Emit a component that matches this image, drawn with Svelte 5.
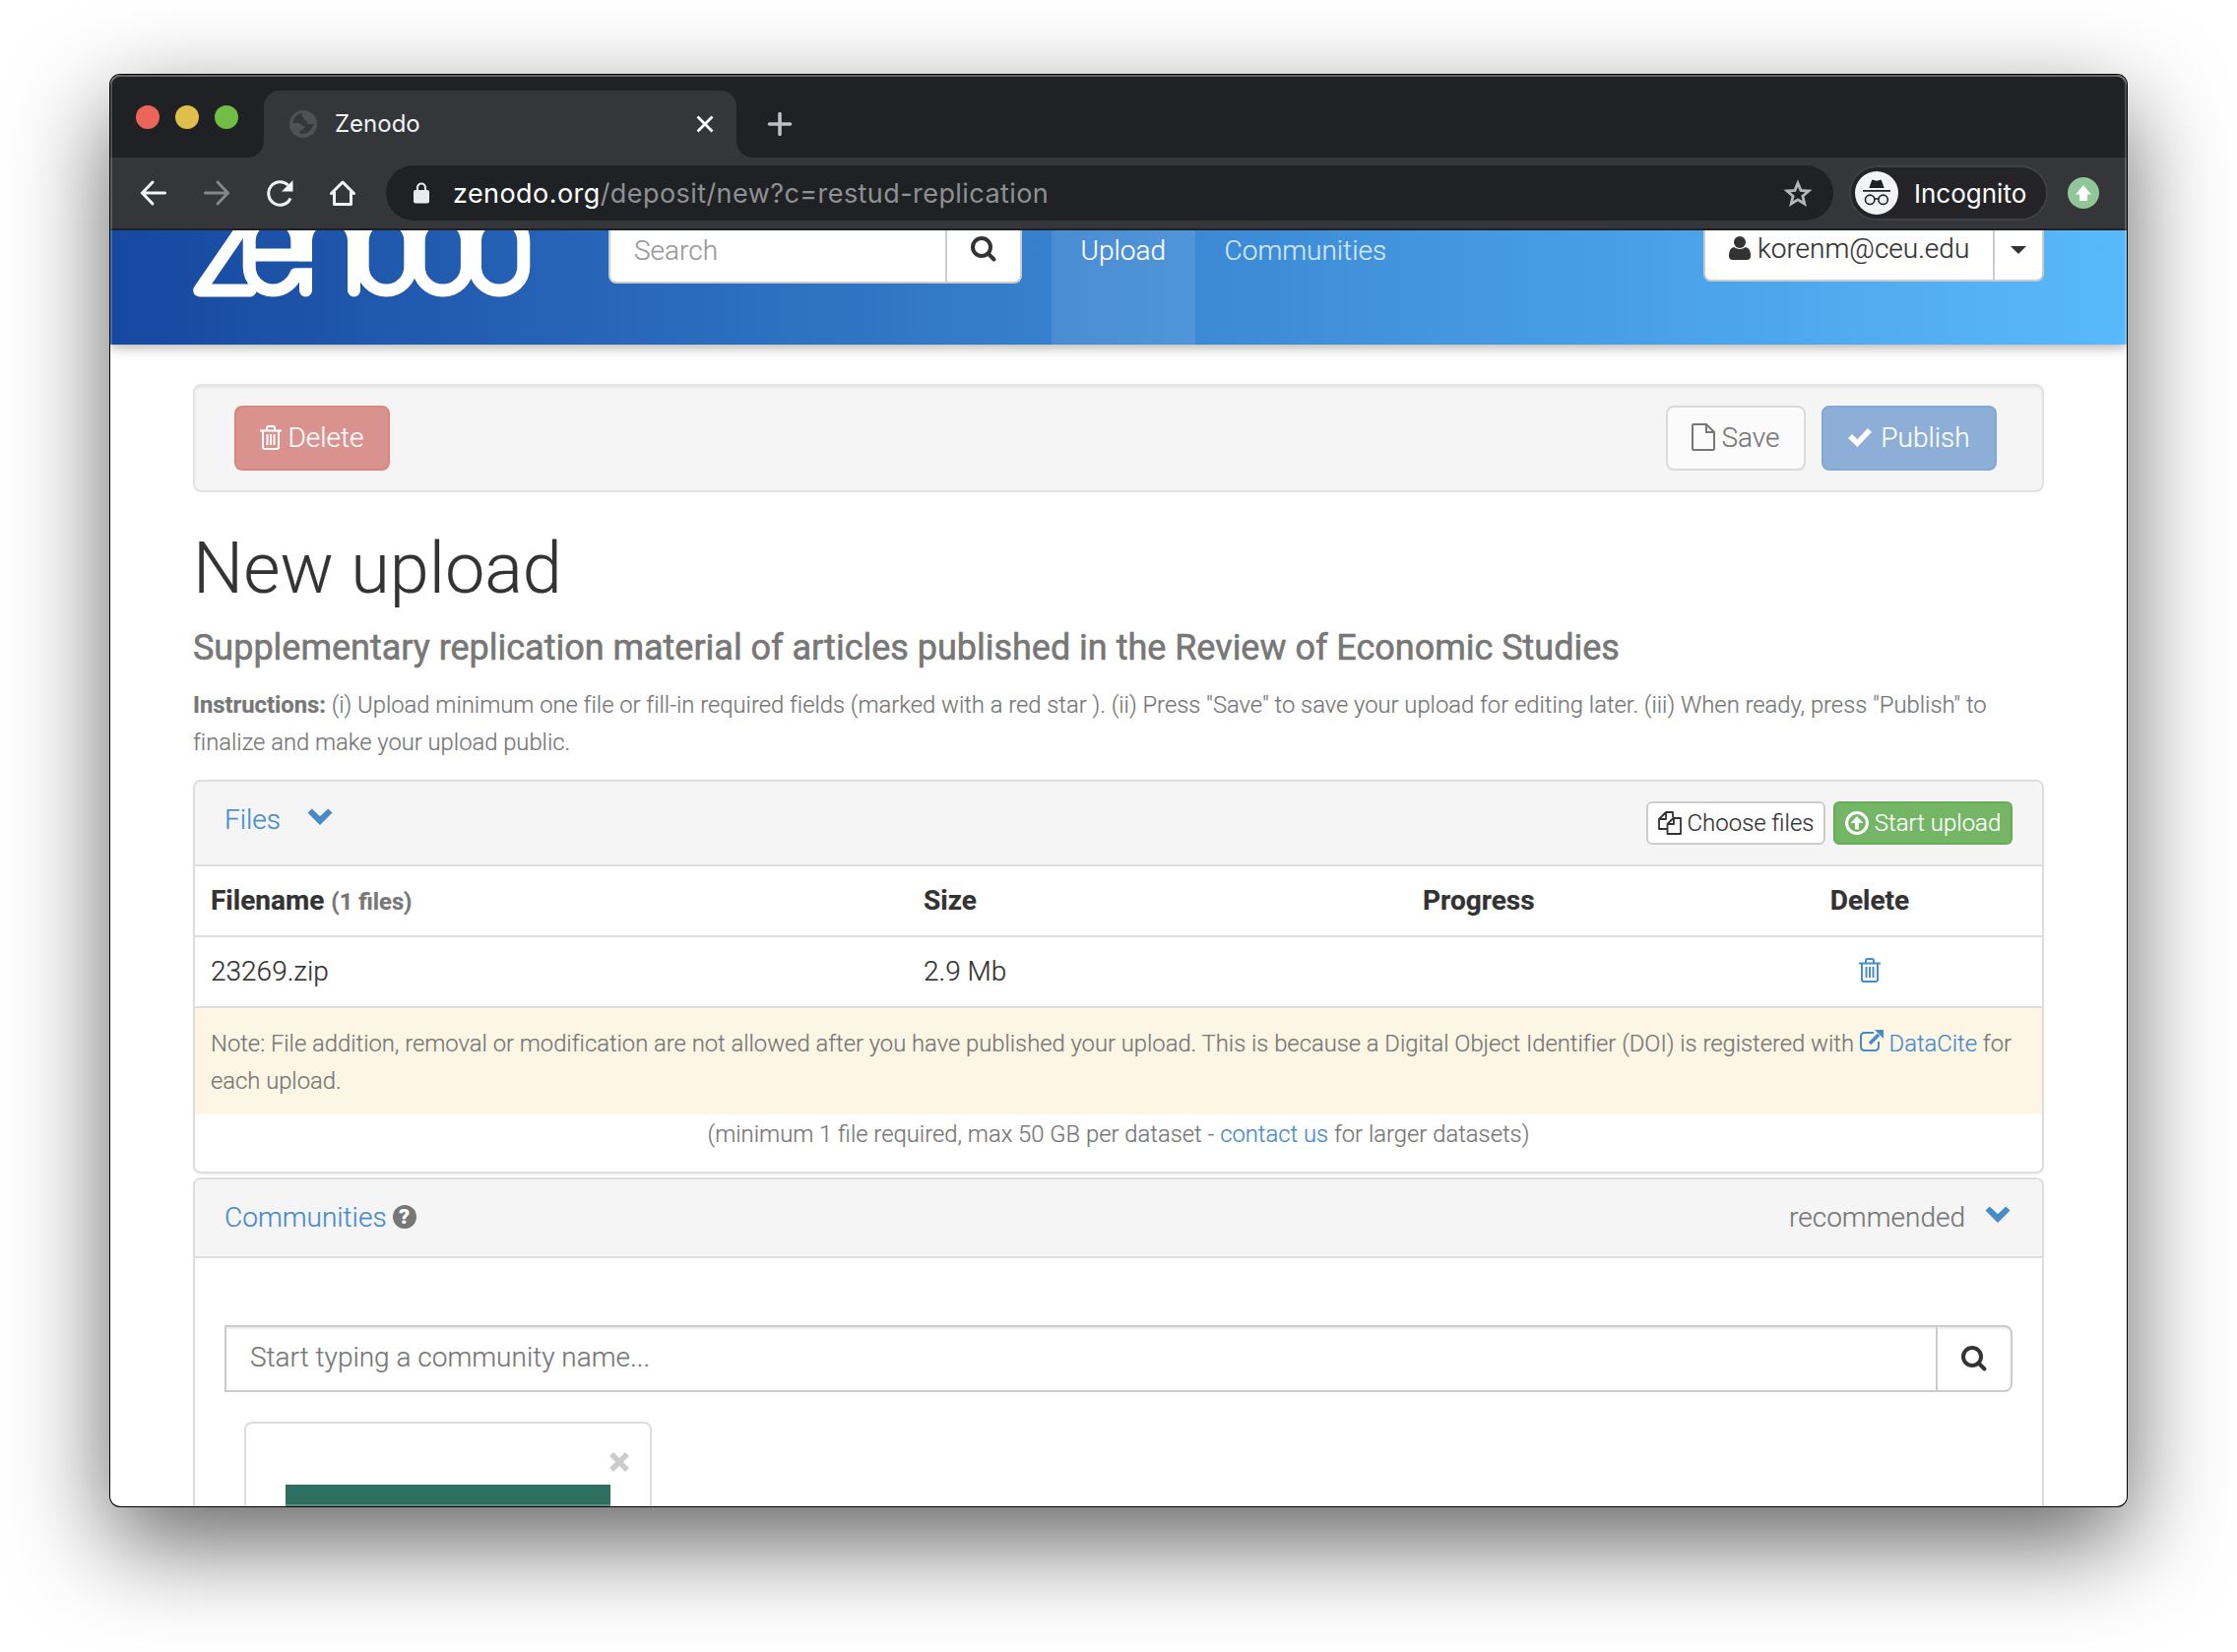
<script>
  const link = '#';
</script>

{#snippet trash()}
  <svg class="i-trash" viewBox="0 0 22 25" fill="none" stroke="currentColor" stroke-width="2">
    <path d="M0 5.5h22M3 5.5V22q0 2 2 2h12q2 0 2-2V5.5M7 5V3q0-2 2-2h4q2 0 2 2v2M7.500 9v11M11 9v11M14.500 9v11" />
  </svg>
{/snippet}

{#snippet search()}
  <svg class="i-search" viewBox="0 0 26 26" fill="none" stroke="currentColor" stroke-width="4">
    <circle cx="11" cy="11" r="9" /><path d="M17.500 17.500l6 6" stroke-linecap="round" />
  </svg>
{/snippet}

{#snippet chevron()}
  <svg class="i-chev" viewBox="0 0 26 17"><path d="M0.500 4.500L4.800 0.500 13 8.300 21.200 0.500 25.500 4.500 13 17z" fill="currentColor" /></svg>
{/snippet}

<div class="desktop">
  <div class="window">
    <div class="tabstrip">
      <div class="lights"><i class="red"></i><i class="yellow"></i><i class="green"></i></div>
      <div class="tab">
        <svg class="globe" viewBox="0 0 28 28">
          <circle cx="14" cy="14" r="14" fill="#505154" />
          <path d="M13 3c-5 .5-9.500 5-9.700 10.500 3-1 6-1 8 .5 1.500 1.500 3 1.500 4 2 1 1-.5 2-1.500 3-1.500 1.500-3 1.500-3.500 3-.2 1.200 1 2 2.700 2 6 0 11-5 11.500-11-1.500 1.500-3 1-5 1-2 0-2-1.500-1.500-3-1-1-3-.5-3.500-2 .5-1.500-1-2-2-3-.3-1.500.2-2 .5-3z" fill="#35363a" />
        </svg>
        <span class="tabname">Zenodo</span>
        <svg class="tabclose" viewBox="0 0 18 18" stroke="#fff" stroke-width="2.800"><path d="M1.500 1.500l15 15M16.500 1.500l-15 15" /></svg>
      </div>
      <svg class="plus" viewBox="0 0 24 24" stroke="#bdc1c6" stroke-width="3.600" stroke-linecap="round"><path d="M12 1.500v21M1.500 12h21" /></svg>
    </div>

    <div class="toolbar">
      <svg class="nav" viewBox="0 0 28 28" fill="none" stroke="#f1f3f4" stroke-width="3" stroke-linecap="round"><path d="M25.500 14H3M13 3L2.500 14 13 25" /></svg>
      <svg class="nav" viewBox="0 0 28 28" fill="none" stroke="#85868a" stroke-width="3" stroke-linecap="round"><path d="M2.500 14H25M15 3l10.500 11L15 25" /></svg>
      <svg class="nav" viewBox="0 0 28 28"><path d="M25 19.500A11.700 11.700 0 1 1 22.500 6" fill="none" stroke="#f1f3f4" stroke-width="3" /><path d="M27.500 1v11.500H16z" fill="#f1f3f4" /></svg>
      <svg class="nav" viewBox="0 0 28 28" fill="none" stroke="#f1f3f4" stroke-width="3" stroke-linejoin="round" stroke-linecap="round"><path d="M2.500 14.500L14 3l11.500 11.500M5.500 13v12.500h17V13" /></svg>
      <div class="omnibox">
        <svg class="lock" viewBox="0 0 16 22"><rect y="8" width="16" height="13.500" rx="2" fill="#e8eaed" /><path d="M4 9V5.500a4 4 0 0 1 8 0V9" fill="none" stroke="#e8eaed" stroke-width="2.200" /></svg>
        <span class="url">zenodo.org<em>/deposit/new?c=restud-replication</em></span>
        <svg class="star" viewBox="0 0 30 28" fill="none" stroke="#b4b5b7" stroke-width="2.800"><path d="M15 4l3 7.400 8 .600-6.100 5.200 1.900 7.800L15 20.800 8.200 25l1.900-7.800L4 12l8-.600z" /></svg>
      </div>
      <div class="incognito">
        <svg viewBox="0 0 44 44">
          <circle cx="22" cy="22" r="22" fill="#f1f3f4" />
          <path d="M14.300 17l2.700-7.500q.5-1.200 1.500-.8l3.500 1 3.500-1q1-.4 1.500.8l2.700 7.500zM8 19h28v1.800H8z" fill="#202124" />
          <g fill="none" stroke="#202124" stroke-width="1.600"><circle cx="15.200" cy="28.800" r="4.700" /><circle cx="28.600" cy="28.800" r="4.700" /><path d="M19.900 28.300q2-1 4 0" /></g>
        </svg>
        <span>Incognito</span>
      </div>
      <svg class="update" viewBox="0 0 32 32"><circle cx="16" cy="16" r="16" fill="#91c798" /><path d="M16 8l8 9.500h-4V24h-8v-6.500H8z" fill="#fff" /></svg>
    </div>

    <div class="page">
      <header>
        <svg class="logo" viewBox="0 0 344 70" fill="none" stroke="#fff" stroke-width="13" stroke-linecap="round" stroke-linejoin="round">
          <path d="M54 -8L6.700 61H58" />
          <path d="M57.200 25V11a24.300 24.300 0 0 1 48.600 0V25M57.200 25H121M57.200 11V36.700A24.300 24.300 0 0 0 81.500 61C93 61 102 52 104.500 44.800H121M107 -2V25" stroke-linecap="butt" />
          <path d="M114.500 45V61" />
          <path d="M114.500 31.300V11a24.500 24.500 0 0 1 49 0V31" stroke-linecap="butt" />
          <path d="M163.500 0V61" />
          <rect x="172.200" y="-13.300" width="48.600" height="74.300" rx="24.300" />
          <rect x="229.200" y="-13.300" width="49.200" height="74.300" rx="24.300" />
          <rect x="286.500" y="-13.300" width="49.300" height="74.300" rx="24.300" />
        </svg>
        <div class="hsearch"><span>Search</span><b>{@render search()}</b></div>
        <a class="navlink active" href={link}>Upload</a>
        <a class="navlink" href={link}>Communities</a>
        <div class="user">
          <span><svg viewBox="0 0 22 24" fill="#333"><circle cx="11" cy="6" r="6" /><path d="M5 11q6 4 12 0c4 1 5 5 5 9q0 4-4 4H4q-4 0-4-4c0-4 1-8 5-9z" /></svg>korenm@ceu.edu</span>
          <b><svg class="caret" viewBox="0 0 16 8"><path d="M0 0h16l-8 8z" fill="#333" /></svg></b>
        </div>
      </header>

      <main>
        <div class="well">
          <button class="btn danger">{@render trash()}Delete</button>
          <button class="btn save"><svg class="i-file" viewBox="0 0 24 28" fill="none" stroke="currentColor" stroke-width="2"><path d="M1 2q0-1 1-1h13l8 8v17q0 1-1 1H2q-1 0-1-1zM15 1v8h8" /></svg>Save</button>
          <button class="btn publish"><svg class="i-check" viewBox="0 0 24 19"><path d="M0 10l4-4 5.500 5.300L20 0l4 3.800L9.500 19z" fill="currentColor" /></svg>Publish</button>
        </div>

        <h1>New upload</h1>
        <h4>Supplementary replication material of articles published in the Review of Economic Studies</h4>
        <p class="instr"><strong>Instructions:</strong> (i) Upload minimum one file or fill-in required fields (marked with a red star ). (ii) Press "Save" to save your upload for editing later. (iii) When ready, press "Publish" to<br />finalize and make your upload public.</p>

        <section class="panel files">
          <div class="phead">
            <a href={link}>Files</a>{@render chevron()}
            <button class="sm"><svg viewBox="0 0 24 24" fill="none" stroke="currentColor" stroke-width="1.800" stroke-linejoin="round"><path d="M9 18H1V8l7-7h7v5M8 1v7H1M9.500 13l6-6H23v16H9.500zM16 7v6H9.500" /></svg>Choose files</button>
            <button class="sm go"><svg viewBox="0 0 24 24"><circle cx="12" cy="12" r="10.400" fill="none" stroke="#fff" stroke-width="3" /><path d="M12 5l6.500 7H14v6.500h-4V12H5.500z" fill="#fff" /></svg>Start upload</button>
          </div>
          <div class="row th"><span>Filename <small>(1 files)</small></span><span>Size</span><span>Progress</span><span class="c">Delete</span></div>
          <div class="row"><span>23269.zip</span><span>2.9 Mb</span><span></span><span class="c">{@render trash()}</span></div>
          <p class="note">Note: File addition, removal or modification are not allowed after you have published your upload. This is because a Digital Object Identifier (DOI) is registered with <a href={link}><svg viewBox="0 0 24 22" fill="none" stroke="currentColor" stroke-width="2"><path d="M14 3H5Q1 3 1 7v10q0 4 4 4h10q4 0 4-4v-5" /><path d="M10 14L19 5" stroke-width="3.500" /><path d="M15 0h9v9z" fill="currentColor" stroke="none" /></svg> DataCite</a> for<br />each upload.</p>
          <p class="min">(minimum 1 file required, max 50 GB per dataset - <a href={link}>contact us</a> for larger datasets)</p>
        </section>

        <section class="panel comm">
          <div class="phead">
            <a href={link}>Communities</a><i class="help">?</i>
            <span class="rec">recommended</span>{@render chevron()}
          </div>
          <div class="csearch"><span>Start typing a community name...</span><b>{@render search()}</b></div>
          <div class="card">
            <svg class="x" viewBox="0 0 20 20" stroke="#ccc" stroke-width="5.600"><path d="M2 2l16 16M18 2L2 18" /></svg>
            <div class="cover"></div>
          </div>
        </section>
      </main>
    </div>
  </div>
</div>

<style>
  :global(body) { margin: 0; background: #fff; }
  * { box-sizing: border-box; }
  svg { display: block; flex: none; overflow: visible; }
  a { color: #468bca; text-decoration: none; }
  .desktop { width: 2272px; height: 1678px; padding: 76px 112px 0; overflow: hidden; background: #fff; }
  .window { position: relative; width: 2048px; height: 1454px; border-radius: 10px; overflow: hidden; display: flex; flex-direction: column; background: #fff; box-shadow: 0 0 0 1px #000, 0 36px 100px rgba(0, 0, 0, .62); }
  /* thin light rim along the inner window edge */
  .window::after { content: ''; position: absolute; inset: 0; height: 276px; border-radius: 10px 10px 0 0; box-shadow: inset 2px 0 0 rgba(255, 255, 255, .2), inset -2px 0 0 rgba(255, 255, 255, .2), inset 0 2px 0 rgba(255, 255, 255, .3); pointer-events: none; }

  .tabstrip { height: 84px; flex: none; background: #202124; display: flex; align-items: flex-start; }
  .lights { display: flex; gap: 16px; padding: 31px 0 0 26px; width: 156px; }
  .lights i { width: 24px; height: 24px; border-radius: 50%; }
  .red { background: #ec6559; } .yellow { background: #e0be4c; } .green { background: #71be47; }
  .tab { position: relative; width: 480px; height: 68px; margin-top: 16px; padding: 0 23px 0 26px; border-radius: 16px 16px 0 0; background: #35363a; display: flex; align-items: center; }
  .tab::before, .tab::after { content: ''; position: absolute; bottom: 0; width: 16px; height: 16px; }
  .tab::before { left: -16px; background: radial-gradient(circle at 0 0, #202124 15.500px, #35363a 16px); }
  .tab::after { right: -16px; background: radial-gradient(circle at 100% 0, #202124 15.500px, #35363a 16px); }
  .globe { width: 28px; }
  .tabname { margin: -1px 0 0 18px; flex: 1; color: #f1f3f4; font: 400 24px Inter, sans-serif; }
  .tabclose { width: 18px; }
  .plus { width: 24px; margin: 38px 0 0 32px; }

  .toolbar { height: 74px; flex: none; background: #35363a; border-bottom: 2px solid #202124; display: flex; align-items: center; padding-left: 30px; }
  .nav { width: 28px; margin-right: 36px; }
  .omnibox { width: 1470px; height: 56px; margin-left: -6px; border-radius: 28px; background: #202124; display: flex; align-items: center; padding: 0 21px 0 28px; }
  .lock { width: 16px; }
  .url { flex: 1; margin-left: 24px; color: #fff; font: 400 27px Inter, sans-serif; letter-spacing: .43px; }
  .url em { font-style: normal; color: #8f9093; }
  .star { width: 30px; }
  .incognito { width: 202px; height: 56px; margin-left: 16px; border: 2px solid #3f4045; border-radius: 28px; background: #242328; display: flex; align-items: center; padding-left: 4px; color: #fff; font: 400 26px Inter, sans-serif; }
  .incognito svg { width: 44px; margin-right: 16px; }
  .update { width: 32px; margin-left: 20px; }

  .page { flex: 1; min-height: 0; overflow: hidden; font: 300 28px/40px Roboto, sans-serif; color: #333; -webkit-text-stroke: .2px; }
  header { height: 116px; padding: 0 84px; display: flex; align-items: flex-start; background: linear-gradient(90deg, #1648a0, #3b88d4 53%, #59b9fa); box-shadow: 0 2px 12px rgba(0, 0, 0, .35); position: relative; clip-path: inset(0 0 -20px 0); }
  .logo { width: 344px; height: 70px; overflow: hidden; }
  .hsearch { display: flex; width: 420px; height: 54px; margin-left: 78px; background: #fff; border: 2px solid #ccc; border-top: 0; border-radius: 0 0 8px 8px; }
  .hsearch span { flex: 1; color: #999; padding: 1px 0 0 24px; }
  .hsearch b { width: 76px; border-left: 2px solid #ccc; display: flex; justify-content: center; padding-top: 6px; }
  .i-search { width: 26px; height: 26px; color: #333; }
  .navlink { height: 116px; padding: 1px 30px 0; color: #d5e7f8; }
  .navlink.active { padding: 1px 29.500px 0; color: #fff; background: rgba(255, 255, 255, .1); margin-left: 30px; }
  .user { display: flex; width: 346px; height: 52px; margin-left: auto; background: #fff; border: 2px solid #ccc; border-top: 0; border-radius: 0 0 8px 8px; color: #333; line-height: 38px; }
  .user span { flex: 1; padding-left: 24px; display: flex; align-items: flex-start; gap: 7px; }
  .user span svg { width: 22px; margin-top: 6px; }
  .user b { width: 50px; border-left: 2px solid #ccc; display: flex; justify-content: center; padding-top: 16px; }
  .caret { width: 16px; height: 8px; }

  main { padding: 40px 84px 0; }
  .well { height: 110px; border: 2px solid #e3e3e3; border-radius: 8px; background: #f5f5f5; box-shadow: inset 0 2px 2px rgba(0, 0, 0, .05); display: flex; padding: 20px 46px 0 40px; }
  button { font-family: Roboto, sans-serif; font-weight: 300; display: flex; align-items: center; justify-content: center; padding: 0; }
  .btn { height: 66px; font-size: 28px; border-radius: 8px; border: 2px solid; padding-bottom: 2px; }
  .danger { width: 158px; color: #fff; background: #da928e; border-color: #d78680; gap: 6px; }
  .save { width: 142px; margin-left: auto; color: #777; background: #fbfbfb; border-color: #dbdbdb; gap: 6px; }
  .publish { width: 178px; margin-left: 16px; color: #fff; background: #8dafd7; border-color: #82a8d3; gap: 9px; }
  .i-trash { width: 22px; height: 25px; }
  .i-file { width: 24px; }
  .i-check { width: 24px; }
  h1 { margin: 38px 0 0; font: 300 72px/80px Roboto, sans-serif; }
  h4 { margin: 20px 0 0; font: 400 36px/40px Roboto, sans-serif; letter-spacing: -.015px; color: #777; white-space: nowrap; -webkit-text-stroke: .6px; }
  .instr { margin: 19px 0 0; font-size: 23.800px; line-height: 38px; letter-spacing: -.015px; color: #777; white-space: nowrap; }
  strong { font-weight: 700; }
  .panel { border: 2px solid #ddd; border-radius: 8px; box-shadow: 0 2px 2px rgba(0, 0, 0, .05); }
  .files { margin-top: 19px; height: 400px; }
  .phead { background: #f5f5f5; border-bottom: 2px solid #ddd; border-radius: 6px 6px 0 0; display: flex; align-items: flex-start; padding: 19px 30px 0; }
  .files .phead { height: 86px; }
  .i-chev { width: 26px; height: 17px; margin: 8px 0 0 27px; color: #468bca; }
  .sm { height: 44px; width: 182px; margin-top: 1px; font-size: 24px; border: 2px solid #ccc; border-radius: 6px; background: #fff; color: #333; gap: 6px; }
  .files .sm:nth-of-type(1) { margin-left: auto; }
  .sm svg { width: 24px; }
  .sm.go { margin-left: 8px; background: #74b566; border-color: #67ab58; color: #fff; }
  .row { height: 72px; border-bottom: 2px solid #ddd; display: grid; grid-template-columns: 724px 507px 375px 1fr; padding: 15px 0 0 16px; }
  .th { font-weight: 700; }
  .row small { font-size: 23.800px; color: #777; }
  .row .c { width: 158px; display: flex; align-items: flex-start; justify-content: center; color: #468bca; }
  .th .c { color: #333; }
  .row .i-trash { margin-top: 6px; }
  .note { margin: 0; height: 108px; background: #fdf6e4; padding: 17px 16px 0; font-size: 23.800px; line-height: 38px; letter-spacing: -.015px; color: #777; white-space: nowrap; }
  .note svg { width: 24px; display: inline-block; }
  .min { margin: 0; text-align: center; font-size: 23.800px; line-height: 40px; color: #777; }
  .comm { margin-top: 4px; height: 500px; }
  .comm .phead { height: 80px; padding-right: 32px; }
  .help { width: 24px; height: 24px; margin: 7px 0 0 6px; border-radius: 50%; background: #777; color: #fff; font: 900 21px/25px Roboto, sans-serif; text-align: center; }
  .rec { margin-left: auto; color: #777; }
  .comm .i-chev { margin-left: 20px; }
  .csearch { margin: 68px 30px 0; height: 68px; border: 2px solid #ccc; border-radius: 0 8px 8px 0; display: flex; box-shadow: inset 0 2px 2px rgba(0, 0, 0, .07); color: #777; }
  .csearch span { flex: 1; padding: 11px 0 0 24px; }
  .csearch b { width: 76px; border-left: 2px solid #ccc; display: flex; justify-content: center; align-items: center; padding-bottom: 1px; }
  .card { width: 414px; height: 300px; margin: 30px 0 0 50px; border: 2px solid #ddd; border-radius: 8px; padding: 29px 20px 0 40px; }
  .x { width: 20px; height: 20px; margin: 0 1px 0 auto; }
  .cover { width: 330px; height: 200px; margin-top: 13px; background: linear-gradient(#2e6f62 20px, #5d9085 20px, #5d9085 22px, #2e6f62 22px); }
</style>
